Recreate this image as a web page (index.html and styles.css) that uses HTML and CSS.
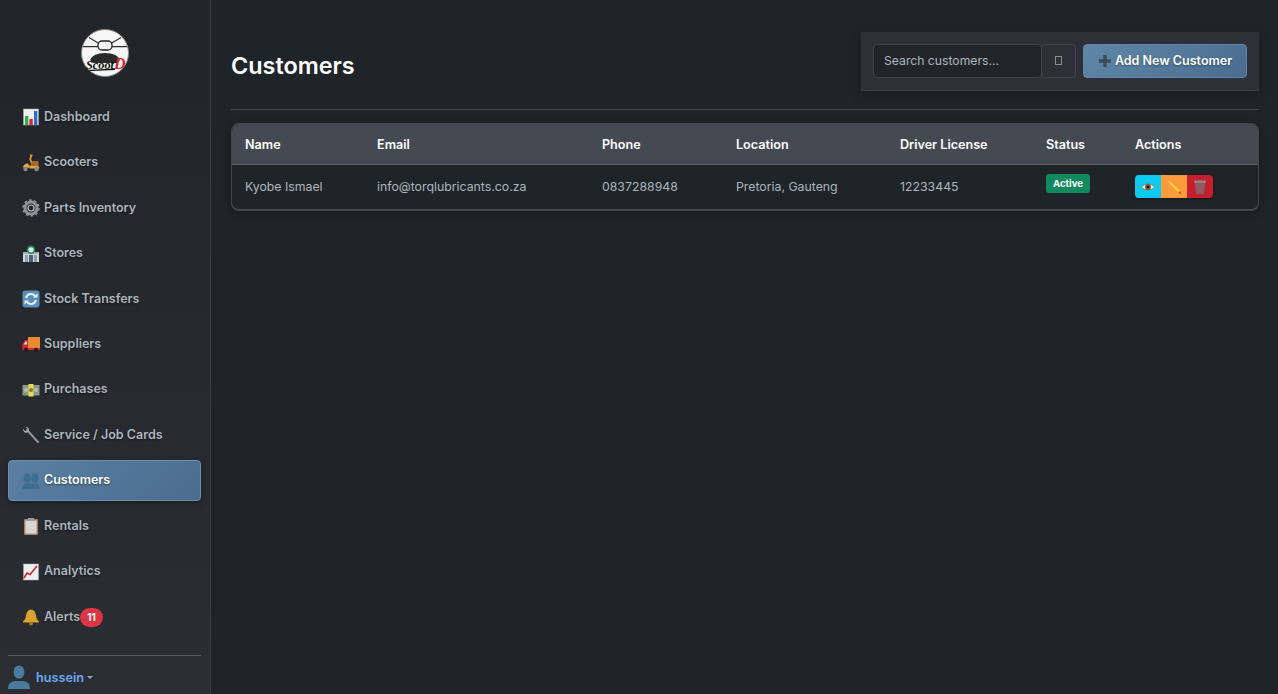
FILE: index.html
```html
<!DOCTYPE html>
<html lang="en">
<head>
    <meta charset="UTF-8">
    <meta name="viewport" content="width=device-width, initial-scale=1.0">
    <title>Customers</title>
    <link rel="stylesheet" href="styles.css">
</head>
<body>
    <div class="layout">
        <div class="sidebar">
            <div class="logo">
                <svg width="48" height="48" viewBox="0 0 48 48">
                    <circle cx="24" cy="24" r="23.5" fill="#f6f6f6" stroke="#8a8a8a" stroke-width="1"/>
                    <path d="M2 17.7 H17 M31 17.7 H46 M8 8.5 L18 14.5 M40 8.5 L30 14.5" stroke="#333" stroke-width="1.2" fill="none"/>
                    <rect x="17" y="12" width="14" height="9" rx="4" fill="#f2f2f2" stroke="#222" stroke-width="1.3"/>
                    <path d="M9 31 Q12 24 24 24 Q36 24 39 31 L36 34 H12 Z" fill="#2a2a2a"/>
                    <text x="5" y="39.5" class="logo-word" textLength="28" lengthAdjust="spacingAndGlyphs">Scoot</text>
                    <text x="33" y="40" class="logo-letter">D</text>
                    <path d="M5 41 L34 39.5 L34 41 L10 42Z" fill="#111"/>
                </svg>
            </div>
            <div class="nav">
                <a class="nav-item" href="#">
                    <svg class="nav-icon" viewBox="0 0 18 18"><rect x="1.5" y="1" width="15" height="16" fill="#f2f2f2" stroke="#aaa" stroke-width=".5"/><rect x="3" y="8" width="3.4" height="9" fill="#2faf4f"/><rect x="7.4" y="11" width="3.4" height="6" fill="#d7282f"/><rect x="12" y="3" width="3.4" height="14" fill="#2a6fc4"/></svg>
                    Dashboard
                </a>
                <a class="nav-item" href="#">
                    <svg class="nav-icon" viewBox="0 0 18 18"><path d="M8 1 L9.6 1.4 L8.2 5 L11 12.5 H5" stroke="#d89a2a" stroke-width="1.8" fill="none"/><path d="M.5 14.5 Q1.5 9.5 6 9.5 L8 13.5 H1Z" fill="#e2a93a"/><rect x="9.5" y="7" width="7" height="6" rx="1" fill="#a8672a"/><path d="M7 14.5 H17.5 Q17 11 13 12 H9Z" fill="#e2a93a"/><circle cx="3.5" cy="15" r="2.2" fill="#8a8a8a"/><circle cx="14.5" cy="15" r="2.2" fill="#8a8a8a"/></svg>
                    Scooters
                </a>
                <a class="nav-item" href="#">
                    <svg class="nav-icon" viewBox="0 0 18 18"><circle cx="9" cy="9" r="6" fill="none" stroke="#8d9298" stroke-width="3"/><circle cx="9" cy="9" r="7.6" fill="none" stroke="#8d9298" stroke-width="2.2" stroke-dasharray="2.6 2.2"/><circle cx="9" cy="9" r="3" fill="none" stroke="#c5c8cc" stroke-width="1.2"/></svg>
                    Parts Inventory
                </a>
                <a class="nav-item" href="#">
                    <svg class="nav-icon" viewBox="0 0 18 18"><rect x="1" y="7" width="16" height="10" fill="#d5d8d8"/><rect x="1" y="7" width="16" height="2" fill="#9fb0ad"/><rect x="3" y="10" width="3" height="7" fill="#8aa0ad"/><rect x="12" y="10" width="3" height="7" fill="#8aa0ad"/><rect x="7" y="10" width="4" height="7" fill="#46657c"/><circle cx="9" cy="4.8" r="4.2" fill="#1f8f5c"/><circle cx="9" cy="4.8" r="2.6" fill="#dfe8e4"/></svg>
                    Stores
                </a>
                <a class="nav-item" href="#">
                    <svg class="nav-icon" viewBox="0 0 18 18"><rect x=".5" y=".5" width="17" height="17" rx="3" fill="#5a8fbd"/><path d="M4 8 A5.2 5.2 0 0 1 13.5 6.5 M14 10 A5.2 5.2 0 0 1 4.5 11.5" stroke="#eef3f7" stroke-width="2" fill="none"/><path d="M11 7.5 H15.5 V3.5Z M7 10.5 H2.5 V14.5Z" fill="#eef3f7"/></svg>
                    Stock Transfers
                </a>
                <a class="nav-item" href="#">
                    <svg class="nav-icon" viewBox="0 0 18 18"><rect x="6" y="2" width="12" height="11" fill="#e88a2d"/><path d="M6 5 H3 L.3 9.5 V15 H18 V13 H6Z" fill="#d8262c"/><path d="M3.4 6.4 H5 V9.5 H1.6Z" fill="#bcd6e6"/><circle cx="4" cy="15" r="2.2" fill="#222"/><circle cx="14" cy="15" r="2.2" fill="#222"/></svg>
                    Suppliers
                </a>
                <a class="nav-item" href="#">
                    <svg class="nav-icon" viewBox="0 0 18 18"><rect x=".5" y="4" width="17" height="10.5" fill="#8b9785"/><circle cx="4" cy="9" r="2" fill="#b6bfae"/><circle cx="14" cy="9" r="2" fill="#b6bfae"/><rect x="6.5" y="3" width="5" height="12.5" fill="#e8d75e"/><circle cx="9" cy="9" r="2" fill="#8a7a2e"/></svg>
                    Purchases
                </a>
                <a class="nav-item" href="#">
                    <svg class="nav-icon" viewBox="0 0 18 18"><path d="M5 4 L16 16" stroke="#8f9499" stroke-width="2" stroke-linecap="round"/><path d="M1 2.5 L3 5 L5 5 L5.5 3 L3.5 1 Q7 .8 7 4 Q7 7 3.5 6.7 Q1 6 1 2.5Z" fill="#a8adb2"/></svg>
                    Service / Job Cards
                </a>
                <a class="nav-item active" href="#">
                    <svg class="nav-icon" viewBox="0 0 18 18"><g fill="#3f6c91"><ellipse cx="5.2" cy="6" rx="3.6" ry="4.8"/><ellipse cx="12.8" cy="6" rx="3.6" ry="4.8"/><path d="M.5 16 Q.5 11.5 5 11.5 H13 Q17.5 11.5 17.5 16 V17 H.5Z"/></g></svg>
                    Customers
                </a>
                <a class="nav-item" href="#">
                    <svg class="nav-icon" viewBox="0 0 18 18"><rect x="2" y="2" width="14" height="16" rx="1" fill="#a97f5c"/><rect x="3.4" y="3.6" width="11.2" height="13" fill="#d6d6d6"/><rect x="6" y="1" width="6" height="3" fill="#9a9a9a"/></svg>
                    Rentals
                </a>
                <a class="nav-item" href="#">
                    <svg class="nav-icon" viewBox="0 0 18 18"><rect x="1.5" y="1" width="15" height="16" fill="#efefef" stroke="#aaa" stroke-width=".5"/><path d="M2 15 L5 10 L8 11.5 L15 3" stroke="#d5262c" stroke-width="1.6" fill="none"/></svg>
                    Analytics
                </a>
                <a class="nav-item" href="#">
                    <svg class="nav-icon" viewBox="0 0 18 18"><path d="M9 1.5 Q13.5 2 14 8 Q14.3 12 17 13.5 V14.5 H1 V13.5 Q3.7 12 4 8 Q4.5 2 9 1.5Z" fill="#d9a431"/><circle cx="9" cy="15.5" r="2" fill="#a87a1e"/></svg>
                    Alerts<span class="badge-count">11</span>
                </a>
            </div>
            <div class="user-box">
                <svg class="user-icon" viewBox="0 0 22 24"><g fill="#4a7a9f"><ellipse cx="11" cy="7" rx="5.4" ry="6.6"/><path d="M0 23 Q0 17 7 16 H15 Q22 17 22 23 V24 H0Z"/></g></svg>
                <span class="user-name">hussein</span>
                <span class="caret"></span>
            </div>
        </div>

        <div class="main">
            <div class="page-head">
                <h1>Customers</h1>
                <div class="toolbar">
                    <input class="search-input" type="text" placeholder="Search customers...">
                    <button class="search-btn"><span class="tofu"></span></button>
                    <button class="add-btn">
                        <svg class="plus" viewBox="0 0 14 14"><path d="M5.3 1 H8.7 V5.3 H13 V8.7 H8.7 V13 H5.3 V8.7 H1 V5.3 H5.3Z" fill="#3b4a57"/></svg>
                        Add New Customer
                    </button>
                </div>
            </div>

            <div class="table-box">
                <table>
                    <thead>
                        <tr>
                            <th>Name</th>
                            <th>Email</th>
                            <th>Phone</th>
                            <th>Location</th>
                            <th>Driver License</th>
                            <th>Status</th>
                            <th>Actions</th>
                        </tr>
                    </thead>
                    <tbody>
                        <tr>
                            <td>Kyobe Ismael</td>
                            <td>info@torqlubricants.co.za</td>
                            <td>0837288948</td>
                            <td>Pretoria, Gauteng</td>
                            <td>12233445</td>
                            <td><span class="status">Active</span></td>
                            <td>
                                <div class="actions">
                                    <button class="act view">
                                        <svg viewBox="0 0 16 16" width="16" height="16"><path d="M1 8 Q8 2 15 8 Q8 14 1 8Z" fill="#ece8e0" stroke="#6b5a4a" stroke-width=".5"/><circle cx="8" cy="8" r="2.9" fill="#7a5530"/><circle cx="8" cy="8" r="1.2" fill="#1d1410"/></svg>
                                    </button>
                                    <button class="act edit">
                                        <svg viewBox="0 0 16 16" width="16" height="16"><path d="M5 3 L14 12 L12.5 13.5 L3.5 4.5Z" fill="#f4d23c"/><path d="M2 1.5 L5 3 L3.5 4.5Z" fill="#e2c9a4"/><path d="M14 12 L15.5 15.5 L12.5 13.5Z" fill="#6a5a4a"/></svg>
                                    </button>
                                    <button class="act del">
                                        <svg viewBox="0 0 16 16" width="16" height="16"><path d="M3 4 H13 L12 15 H4Z" fill="#8e5a62"/><rect x="2" y="1.5" width="12" height="2.5" rx="1" fill="#8f8488"/></svg>
                                    </button>
                                </div>
                            </td>
                        </tr>
                    </tbody>
                </table>
            </div>
        </div>
    </div>
</body>
</html>
```

FILE: styles.css
```css
* {
    box-sizing: border-box;
}

body {
    font-family: Inter, "Liberation Sans", sans-serif;
    margin: 0;
    padding: 0;
    background-color: #1f2429;
    color: #adb5bd;
    font-size: 12.3px;
    line-height: 1.5;
    overflow: hidden;
}

.layout {
    display: flex;
    height: 694px;
}

/* Sidebar */
.sidebar {
    width: 211px;
    flex-shrink: 0;
    height: 100%;
    padding: 29px 9px 0 8px;
    background: linear-gradient(180deg, #212529, #2b2d33);
    border-right: 1px solid #3a3e44;
    display: flex;
    flex-direction: column;
}

.logo {
    display: flex;
    justify-content: center;
    height: 48px;
    margin-bottom: 19.4px;
}

.logo-word {
    font-family: "Liberation Serif", serif;
    font-style: italic;
    font-weight: bold;
    font-size: 12px;
    fill: #111;
}

.logo-letter {
    font-family: "Liberation Serif", serif;
    font-style: italic;
    font-weight: bold;
    font-size: 16px;
    fill: #d6202c;
}

.nav {
    display: flex;
    flex-direction: column;
    gap: 4.8px;
}

.nav-item {
    display: flex;
    align-items: center;
    height: 40.65px;
    padding: 1px 13px 0;
    border: 1px solid transparent;
    border-radius: 4px;
    color: #adb5bd;
    font-size: 12.5px;
    font-weight: 600;
    text-decoration: none;
    text-shadow: 0 1px 2px rgba(0,0,0,0.5);
}

.nav-item.active {
    background: linear-gradient(135deg, #5a7fa3, #4a6d8f);
    border-color: #6c8fb0;
    color: #fff;
    box-shadow: 0 2px 6px rgba(0,0,0,0.35);
}

.nav-icon {
    width: 18px;
    height: 18px;
    margin-right: 4px;
    flex-shrink: 0;
}

.badge-count {
    display: inline-block;
    min-width: 23px;
    height: 19px;
    line-height: 19px;
    text-align: center;
    border-radius: 10px;
    background: #dc3545;
    color: #fff;
    font-size: 10px;
    font-weight: 700;
    text-shadow: none;
}

.user-box {
    margin-top: 18.6px;
    padding-top: 9px;
    border-top: 1px solid #54585e;
    display: flex;
    align-items: center;
}

.user-icon {
    width: 22px;
    height: 24px;
    margin-right: 6px;
}

.user-name {
    color: #68a8f5;
    font-size: 12.7px;
    font-weight: 600;
}

.caret {
    width: 0;
    height: 0;
    margin-left: 3px;
    border-left: 3px solid transparent;
    border-right: 3px solid transparent;
    border-top: 3px solid #8fa9c4;
}

/* Main */
.main {
    flex: 1;
    padding: 32px 19px 0 20px;
}

.page-head {
    display: flex;
    justify-content: space-between;
    align-items: center;
    padding-bottom: 18px;
    border-bottom: 1px solid #44484e;
    margin-bottom: 13px;
}

.page-head h1 {
    margin: 10px 0 0;
    color: #fff;
    font-size: 23.4px;
    font-weight: 600;
    line-height: 1.2;
}

.toolbar {
    display: flex;
    align-items: center;
    width: 398px;
    height: 59px;
    padding: 0 12px 1px;
    background: #2d3036;
    border-bottom: 1px solid #3d4046;
    box-shadow: 0 4px 12px rgba(0,0,0,0.2);
}

.search-input {
    width: 169px;
    height: 34px;
    padding: 0 10px;
    background: #212529;
    border: 1px solid #41454b;
    border-radius: 4px;
    color: #adb5bd;
    font-family: inherit;
    font-size: 12.2px;
}

.search-input::placeholder {
    color: #adb5bd;
}

.search-btn {
    width: 35px;
    height: 34px;
    margin-left: -1px;
    background: #2d3036;
    border: 1px solid #41454b;
    border-radius: 4px;
    display: flex;
    align-items: center;
    justify-content: center;
}

.tofu {
    width: 7px;
    height: 9px;
    border: 1px solid #8a8e93;
}

.add-btn {
    width: 164px;
    height: 34px;
    margin-left: 7px;
    background: linear-gradient(135deg, #5f86a8, #4a6d8f);
    border: 1px solid #5f86a8;
    border-radius: 4px;
    color: #fff;
    font-family: inherit;
    font-size: 12.5px;
    font-weight: 600;
    text-shadow: 0 1px 2px rgba(0,0,0,0.4);
    display: flex;
    align-items: center;
    justify-content: center;
    gap: 3px;
    white-space: nowrap;
}

.plus {
    width: 14px;
    height: 14px;
}

/* Table */
.table-box {
    border: 1px solid #44484e;
    border-bottom-width: 2px;
    border-radius: 8px;
    overflow: hidden;
    box-shadow: 0 2px 8px rgba(0,0,0,0.3);
}

table {
    width: 100%;
    border-collapse: collapse;
    table-layout: fixed;
}

th {
    height: 40px;
    padding: 3px 13px 0;
    background: #454a52;
    border-bottom: 1px solid #5a5e65;
    color: #fff;
    font-size: 12.6px;
    font-weight: 600;
    text-align: left;
}

td {
    height: 45px;
    padding: 0 13px;
    color: #adb5bd;
    vertical-align: middle;
}

th:nth-child(1) { width: 132px; }
th:nth-child(2) { width: 225px; }
th:nth-child(3) { width: 134px; }
th:nth-child(4) { width: 164px; }
th:nth-child(5) { width: 146px; }
th:nth-child(6) { width: 89px; }

.status {
    display: inline-block;
    padding: 0 7px;
    height: 19px;
    line-height: 19px;
    background: #0f8a5f;
    border-radius: 3px;
    color: #fff;
    font-size: 9.6px;
    font-weight: 700;
    position: relative;
    top: -3px;
}

.actions {
    display: flex;
    width: 78px;
    height: 23px;
    border-radius: 4px;
    overflow: hidden;
    box-shadow: 0 1px 3px rgba(0,0,0,0.4);
}

.act {
    flex: 1;
    padding: 0;
    border: 0;
    display: flex;
    align-items: center;
    justify-content: center;
}

.act.view { background: #0dcaf0; }
.act.edit { background: #fd9a3a; }
.act.del { background: #c31f2e; }
```
